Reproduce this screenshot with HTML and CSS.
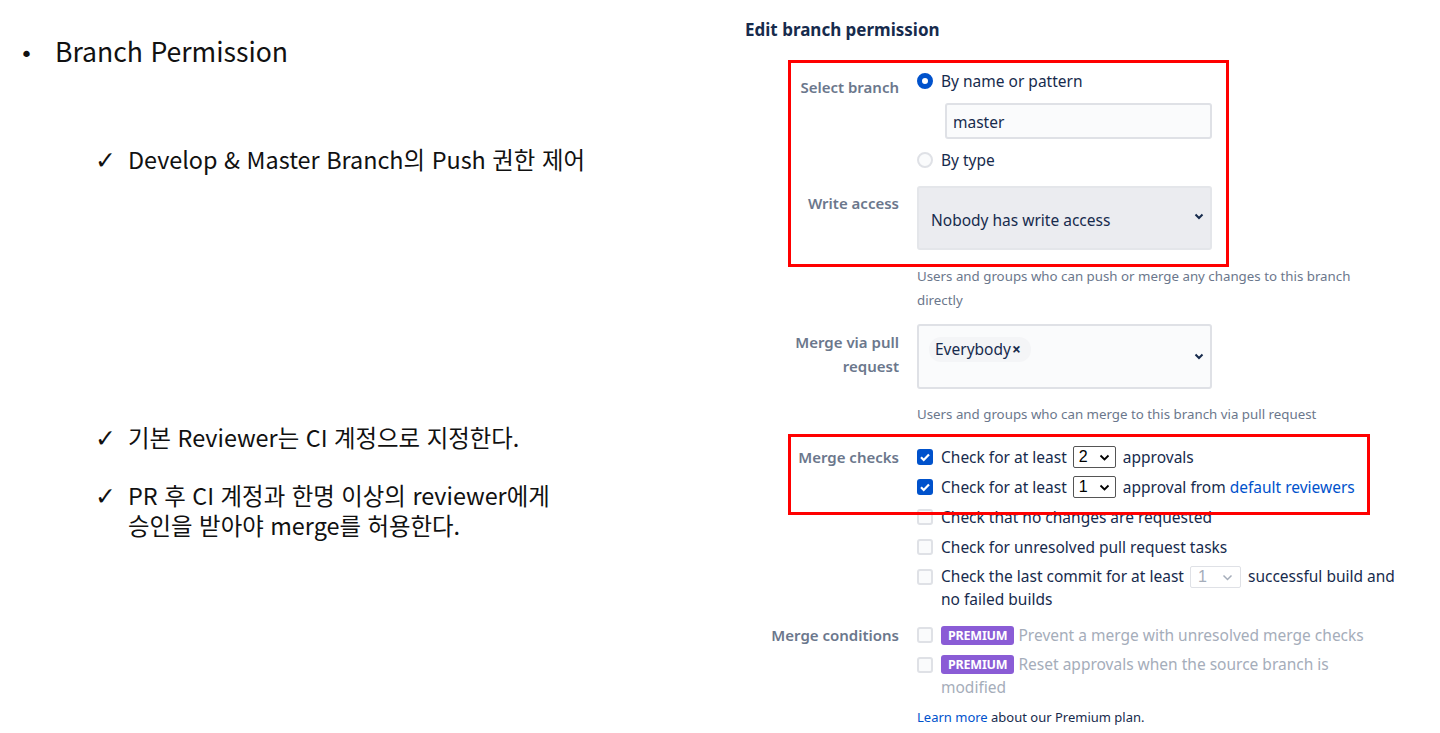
FILE: index.html
```html
<!DOCTYPE html>
<html lang="ko">
<head>
<meta charset="utf-8">
<title>Branch Permission</title>
<link rel="stylesheet" href="styles.css">
</head>
<body>
<div class="slide">
  <section class="notes">
    <div class="bullet"><span class="dot">•</span><span>Branch Permission</span></div>
    <div class="check c1"><span class="tick">✓</span><span>Develop &amp; Master Branch의 Push 권한 제어</span></div>
    <div class="check c2"><span class="tick">✓</span><span>기본 Reviewer는 CI 계정으로 지정한다.</span></div>
    <div class="check c3"><span class="tick">✓</span><span>PR 후 CI 계정과 한명 이상의 reviewer에게<br>승인을 받아야 merge를 허용한다.</span></div>
  </section>

  <section class="form">
    <h2 class="title">Edit branch permission</h2>

    <div class="row r-branch">
      <div class="label lbl-branch">Select branch</div>
      <div class="field">
        <div class="opt"><span class="radio on"></span><span>By name or pattern</span></div>
        <div class="input">master</div>
        <div class="opt bytype"><span class="radio"></span><span>By type</span></div>
      </div>
    </div>

    <div class="row r-write">
      <div class="label lbl-write">Write access</div>
      <div class="field">
        <div class="select grey"><span>Nobody has write access</span>
          <svg class="chev" width="10" height="7" viewBox="0 0 10 7"><path d="M1.5 1.5l3.5 3.5 3.5-3.5" fill="none" stroke="#172b4d" stroke-width="2"/></svg>
        </div>
        <p class="help">Users and groups who can push or merge any changes to this branch directly</p>
      </div>
    </div>

    <div class="row r-merge">
      <div class="label lbl-merge">Merge via pull<br>request</div>
      <div class="field">
        <div class="select tall"><span class="chip">Everybody<b>×</b></span>
          <svg class="chev" width="10" height="7" viewBox="0 0 10 7"><path d="M1.5 1.5l3.5 3.5 3.5-3.5" fill="none" stroke="#172b4d" stroke-width="2"/></svg>
        </div>
        <p class="help">Users and groups who can merge to this branch via pull request</p>
      </div>
    </div>

    <div class="row r-checks">
      <div class="label">Merge checks</div>
      <div class="field">
        <div class="cb-row"><span class="cb on"></span><span>Check for at least <span class="mini">2<svg width="11" height="7" viewBox="0 0 11 7"><path d="M1.5 1.5l4 4 4-4" fill="none" stroke="#000" stroke-width="1.8"/></svg></span> approvals</span></div>
        <div class="cb-row"><span class="cb on"></span><span>Check for at least <span class="mini">1<svg width="11" height="7" viewBox="0 0 11 7"><path d="M1.5 1.5l4 4 4-4" fill="none" stroke="#000" stroke-width="1.8"/></svg></span> approval from <a class="link">default reviewers</a></span></div>
        <div class="cb-row"><span class="cb"></span><span>Check that no changes are requested</span></div>
        <div class="cb-row"><span class="cb"></span><span>Check for unresolved pull request tasks</span></div>
        <div class="cb-row"><span class="cb"></span><span class="wrap">Check the last commit for at least <span class="mini off">1<svg width="11" height="7" viewBox="0 0 11 7"><path d="M1.5 1.5l4 4 4-4" fill="none" stroke="#a5adba" stroke-width="1.5"/></svg></span> successful build and no failed builds</span></div>
      </div>
    </div>

    <div class="row r-cond">
      <div class="label">Merge conditions</div>
      <div class="field">
        <div class="cb-row dis"><span class="cb"></span><span><span class="badge">PREMIUM</span> Prevent a merge with unresolved merge checks</span></div>
        <div class="cb-row dis"><span class="cb"></span><span class="wrap narrow"><span class="badge">PREMIUM</span> Reset approvals when the source branch is modified</span></div>
        <p class="learn"><a class="link">Learn more</a> about our Premium plan.</p>
      </div>
    </div>

    <div class="mark m1"></div>
    <div class="mark m2"></div>
  </section>
</div>
</body>
</html>
```

FILE: styles.css
```css
html, body {
  margin: 0;
  padding: 0;
  background: #fff;
}

.slide {
  width: 1440px;
  height: 733px;
  display: flex;
  overflow: hidden;
}

/* Left notes */
.notes {
  width: 745px;
  flex: none;
  font-family: "Noto Sans CJK KR", "Noto Sans", sans-serif;
  color: #111;
}

.bullet {
  display: flex;
  align-items: baseline;
  font-size: 26.6px;
  line-height: 36px;
  margin-top: 33px;
  padding-left: 20px;
}
.bullet .dot {
  width: 35px;
  font-family: "DejaVu Sans", sans-serif;
  font-size: 22px;
}

.check {
  display: flex;
  align-items: baseline;
  font-size: 23.4px;
  line-height: 30px;
  padding-left: 95px;
}
.check .tick {
  width: 33px;
  font-family: "DejaVu Sans", sans-serif;
  font-size: 25px;
  line-height: 30px;
}
.c1 { margin-top: 71px; }
.c2 { margin-top: 246px; }
.c3 { margin-top: 26px; }

/* Right form */
.form {
  position: relative;
  flex: 1;
  font-family: "Noto Sans", "Open Sans", sans-serif;
  color: #172b4d;
  font-size: 15.5px;
}

.title {
  font-size: 17px;
  font-weight: 700;
  line-height: 24px;
  margin: 18px 0 0 0;
  color: #172b4d;
}

.row {
  display: grid;
  grid-template-columns: 154px 1fr;
  column-gap: 18px;
  width: 680px;
}

.label {
  text-align: right;
  color: #6b778c;
  font-weight: 600;
  font-size: 15px;
  line-height: 24px;
}

.lbl-branch { padding-top: 6px; }
.lbl-write { padding-top: 5px; }
.lbl-merge { padding-top: 6px; }

.r-branch { margin-top: 27px; }
.r-write { margin-top: 14px; }
.r-merge { margin-top: 12px; }
.r-checks { margin-top: 19px; }
.r-cond { margin-top: 6px; }

.opt {
  display: flex;
  align-items: center;
  gap: 8px;
  line-height: 24px;
}
.bytype { margin-top: 9px; }

.radio {
  width: 16px;
  height: 16px;
  box-sizing: border-box;
  border-radius: 50%;
  border: 2px solid #dfe1e6;
  background: #fafbfc;
}
.radio.on {
  border: 5px solid #0052cc;
  background: #fff;
}

.input {
  margin: 10px 0 0 28px;
  width: 267px;
  height: 36px;
  box-sizing: border-box;
  border: 2px solid #dfe1e6;
  border-radius: 3px;
  background: #fafbfc;
  padding: 0 6px;
  line-height: 34px;
}

.select {
  position: relative;
  width: 295px;
  box-sizing: border-box;
  border: 2px solid #dfe1e6;
  border-radius: 3px;
  background: #fafbfc;
  padding-left: 12px;
}
.select.grey {
  height: 64px;
  background: #ebecf0;
  border-color: #e4e6ea;
  line-height: 64px;
  padding-left: 12px;
}
.select.tall {
  height: 65px;
  padding-top: 11px;
  padding-left: 10px;
}
.chev {
  position: absolute;
  right: 6px;
  top: 27px;
}
.select.grey .chev { top: 25px; }

.chip {
  display: inline-block;
  background: #f4f5f7;
  border-radius: 12px;
  padding: 0 10px 0 6px;
  line-height: 25px;
}
.chip b {
  font-weight: 700;
  margin-left: 1px;
}

.help {
  margin: 14px 0 0 0;
  font-size: 13.3px;
  line-height: 24px;
  color: #6b778c;
  width: 460px;
}
.r-merge .help { margin-top: 13px; }

.cb-row {
  display: flex;
  align-items: flex-start;
  gap: 8px;
  line-height: 24px;
  margin-bottom: 6px;
}
.cb-row .wrap { width: 470px; line-height: 23px; }
.cb-row .wrap.narrow { width: 410px; }
.cb {
  flex: none;
  width: 16px;
  height: 16px;
  margin-top: 4px;
  box-sizing: border-box;
  border-radius: 3px;
  border: 2px solid #dfe1e6;
  background: #fafbfc;
}
.cb.on {
  border: none;
  background: #0052cc url("data:image/svg+xml,%3Csvg xmlns='http://www.w3.org/2000/svg' width='16' height='16'%3E%3Cpath d='M4 8.3l2.7 2.7L12 5.4' fill='none' stroke='white' stroke-width='2.2'/%3E%3C/svg%3E") center/16px 16px no-repeat;
}

.mini {
  display: inline-flex;
  align-items: center;
  justify-content: space-between;
  width: 43px;
  height: 22px;
  box-sizing: border-box;
  border: 1px solid #555;
  border-radius: 2px;
  padding: 0 5px 0 5px;
  margin: 1px 3px 0 2px;
  vertical-align: top;
  line-height: 20px;
  color: #000;
  font-family: "Liberation Sans", sans-serif;
  font-size: 16px;
}
.mini.off {
  width: 51px;
  border-color: #dfe1e6;
  color: #a5adba;
  padding: 0 7px;
}

.link { color: #0052cc; }

.dis { color: #a5adba; }
.badge {
  display: inline-block;
  background: #8a5cd6;
  color: #fff;
  font-weight: 700;
  font-size: 12.5px;
  line-height: 19px;
  padding: 0 7px;
  border-radius: 3px;
  vertical-align: 1px;
  letter-spacing: -0.2px;
}

.learn {
  margin: 1px 0 0 0;
  font-size: 13px;
  line-height: 24px;
  color: #172b4d;
}

/* Red annotation boxes drawn over the screenshot */
.mark {
  position: absolute;
  border: 3px solid #ff0000;
  box-sizing: border-box;
}
.m1 { left: 43px; top: 60px; width: 441px; height: 207px; }
.m2 { left: 43px; top: 434px; width: 582px; height: 81px; }
```
